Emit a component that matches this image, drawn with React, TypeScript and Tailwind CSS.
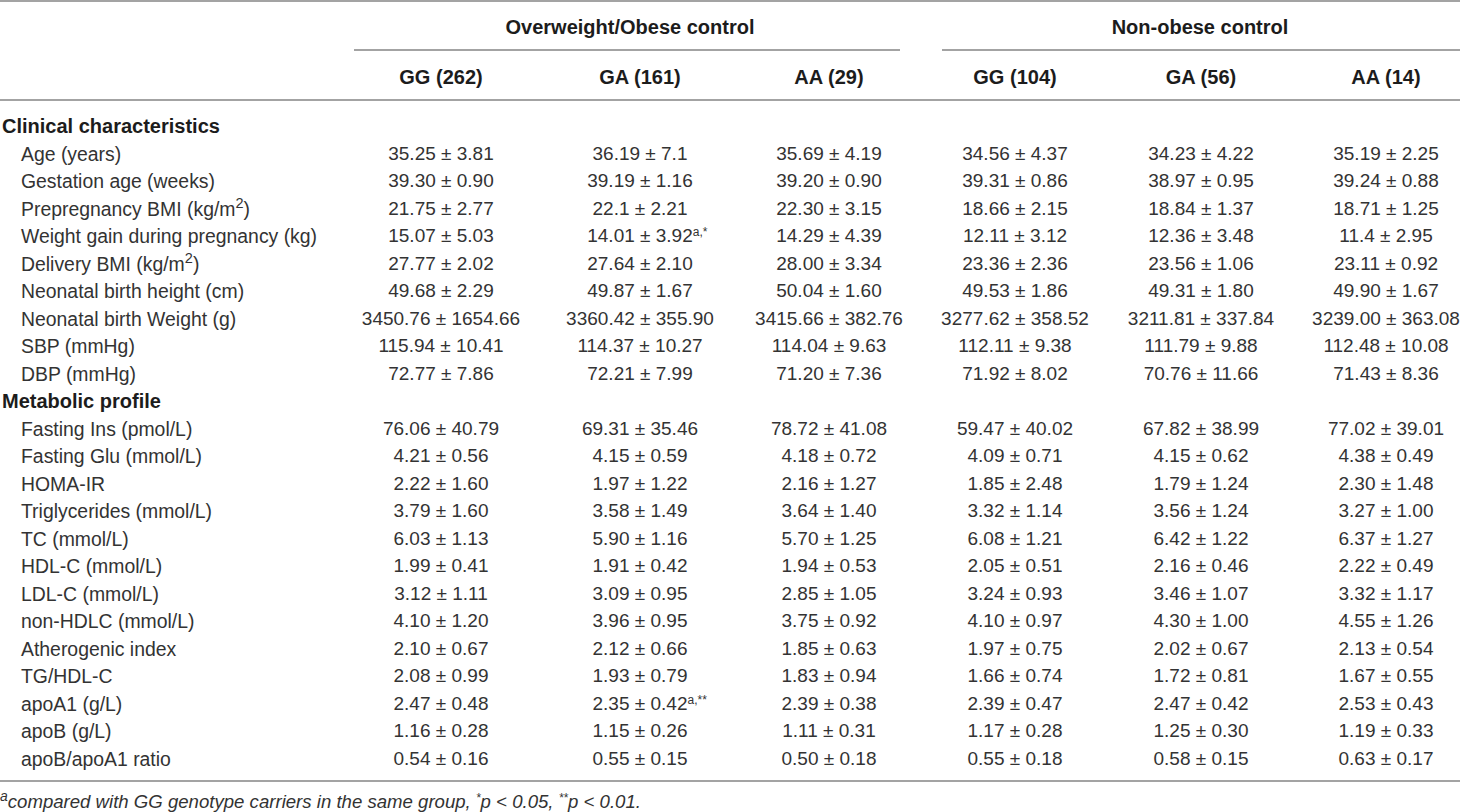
import * as React from 'react';

type Row = {
  label: React.ReactNode;
  values?: React.ReactNode[];
  section?: boolean;
};

const Sup = ({ children }: { children: React.ReactNode }) => (
  <span className="absolute left-full top-[1px] text-[12px] leading-none">{children}</span>
);

const Flag = ({ value, mark }: { value: string; mark: string }) => (
  <span className="relative">
    {value}
    <Sup>{mark}</Sup>
  </span>
);

const kgm2 = (prefix: string) => (
  <>
    {prefix} (kg/m<sup>2</sup>)
  </>
);

const rows: Row[] = [
  { label: 'Clinical characteristics', section: true },
  { label: 'Age (years)', values: ['35.25 ± 3.81', '36.19 ± 7.1', '35.69 ± 4.19', '34.56 ± 4.37', '34.23 ± 4.22', '35.19 ± 2.25'] },
  { label: 'Gestation age (weeks)', values: ['39.30 ± 0.90', '39.19 ± 1.16', '39.20 ± 0.90', '39.31 ± 0.86', '38.97 ± 0.95', '39.24 ± 0.88'] },
  { label: kgm2('Prepregnancy BMI'), values: ['21.75 ± 2.77', '22.1 ± 2.21', '22.30 ± 3.15', '18.66 ± 2.15', '18.84 ± 1.37', '18.71 ± 1.25'] },
  {
    label: 'Weight gain during pregnancy (kg)',
    values: ['15.07 ± 5.03', <Flag value="14.01 ± 3.92" mark="a,*" />, '14.29 ± 4.39', '12.11 ± 3.12', '12.36 ± 3.48', '11.4 ± 2.95'],
  },
  { label: kgm2('Delivery BMI'), values: ['27.77 ± 2.02', '27.64 ± 2.10', '28.00 ± 3.34', '23.36 ± 2.36', '23.56 ± 1.06', '23.11 ± 0.92'] },
  { label: 'Neonatal birth height (cm)', values: ['49.68 ± 2.29', '49.87 ± 1.67', '50.04 ± 1.60', '49.53 ± 1.86', '49.31 ± 1.80', '49.90 ± 1.67'] },
  {
    label: 'Neonatal birth Weight (g)',
    values: ['3450.76 ± 1654.66', '3360.42 ± 355.90', '3415.66 ± 382.76', '3277.62 ± 358.52', '3211.81 ± 337.84', '3239.00 ± 363.08'],
  },
  { label: 'SBP (mmHg)', values: ['115.94 ± 10.41', '114.37 ± 10.27', '114.04 ± 9.63', '112.11 ± 9.38', '111.79 ± 9.88', '112.48 ± 10.08'] },
  { label: 'DBP (mmHg)', values: ['72.77 ± 7.86', '72.21 ± 7.99', '71.20 ± 7.36', '71.92 ± 8.02', '70.76 ± 11.66', '71.43 ± 8.36'] },
  { label: 'Metabolic profile', section: true },
  { label: 'Fasting Ins (pmol/L)', values: ['76.06 ± 40.79', '69.31 ± 35.46', '78.72 ± 41.08', '59.47 ± 40.02', '67.82 ± 38.99', '77.02 ± 39.01'] },
  { label: 'Fasting Glu (mmol/L)', values: ['4.21 ± 0.56', '4.15 ± 0.59', '4.18 ± 0.72', '4.09 ± 0.71', '4.15 ± 0.62', '4.38 ± 0.49'] },
  { label: 'HOMA-IR', values: ['2.22 ± 1.60', '1.97 ± 1.22', '2.16 ± 1.27', '1.85 ± 2.48', '1.79 ± 1.24', '2.30 ± 1.48'] },
  { label: 'Triglycerides (mmol/L)', values: ['3.79 ± 1.60', '3.58 ± 1.49', '3.64 ± 1.40', '3.32 ± 1.14', '3.56 ± 1.24', '3.27 ± 1.00'] },
  { label: 'TC (mmol/L)', values: ['6.03 ± 1.13', '5.90 ± 1.16', '5.70 ± 1.25', '6.08 ± 1.21', '6.42 ± 1.22', '6.37 ± 1.27'] },
  { label: 'HDL-C (mmol/L)', values: ['1.99 ± 0.41', '1.91 ± 0.42', '1.94 ± 0.53', '2.05 ± 0.51', '2.16 ± 0.46', '2.22 ± 0.49'] },
  { label: 'LDL-C (mmol/L)', values: ['3.12 ± 1.11', '3.09 ± 0.95', '2.85 ± 1.05', '3.24 ± 0.93', '3.46 ± 1.07', '3.32 ± 1.17'] },
  { label: 'non-HDLC (mmol/L)', values: ['4.10 ± 1.20', '3.96 ± 0.95', '3.75 ± 0.92', '4.10 ± 0.97', '4.30 ± 1.00', '4.55 ± 1.26'] },
  { label: 'Atherogenic index', values: ['2.10 ± 0.67', '2.12 ± 0.66', '1.85 ± 0.63', '1.97 ± 0.75', '2.02 ± 0.67', '2.13 ± 0.54'] },
  { label: 'TG/HDL-C', values: ['2.08 ± 0.99', '1.93 ± 0.79', '1.83 ± 0.94', '1.66 ± 0.74', '1.72 ± 0.81', '1.67 ± 0.55'] },
  {
    label: 'apoA1 (g/L)',
    values: ['2.47 ± 0.48', <Flag value="2.35 ± 0.42" mark="a,**" />, '2.39 ± 0.38', '2.39 ± 0.47', '2.47 ± 0.42', '2.53 ± 0.43'],
  },
  { label: 'apoB (g/L)', values: ['1.16 ± 0.28', '1.15 ± 0.26', '1.11 ± 0.31', '1.17 ± 0.28', '1.25 ± 0.30', '1.19 ± 0.33'] },
  { label: 'apoB/apoA1 ratio', values: ['0.54 ± 0.16', '0.55 ± 0.15', '0.50 ± 0.18', '0.55 ± 0.18', '0.58 ± 0.15', '0.63 ± 0.17'] },
];

const genotypes = ['GG (262)', 'GA (161)', 'AA (29)', 'GG (104)', 'GA (56)', 'AA (14)'];

const cols = 'grid grid-cols-[320px_242px_156px_222px_150px_222px_148px]';

const Rule = () => <div className="h-[2px] w-full bg-[#a3a3a3]" />;

export default function App() {
  return (
    <div className="w-[1460px] h-[812px] overflow-hidden bg-white font-['Liberation_Sans',Arial,sans-serif] text-[#333333]">
      <Rule />

      {/* group headers */}
      <div className={`${cols} text-[20px] font-bold text-[#1c1c1c]`}>
        <div />
        <div className="col-span-3 flex flex-col">
          <div className="flex h-[47px] items-center justify-center pt-[3px]">Overweight/Obese control</div>
          <div className="ml-[34px] mr-[40px] h-[2px] bg-[#a3a3a3]" />
        </div>
        <div className="col-span-3 flex flex-col">
          <div className="flex h-[47px] items-center justify-center pt-[3px]">Non-obese control</div>
          <div className="ml-[2px] h-[2px] bg-[#a3a3a3]" />
        </div>
      </div>

      {/* genotype headers */}
      <div className={`${cols} h-[48px] items-center pt-[3px] text-[20px] font-bold text-[#1c1c1c]`}>
        <div />
        {genotypes.map((g) => (
          <div key={g} className="text-center">
            {g}
          </div>
        ))}
      </div>

      <Rule />

      <div className="pt-[11px] pb-[8px]">
        {rows.map((row, i) =>
          row.section ? (
            <div key={i} className="flex h-[27.5px] items-center pl-[2px] text-[20px] font-bold text-[#1c1c1c]">
              {row.label}
            </div>
          ) : (
            <div key={i} className={`${cols} h-[27.5px] items-center text-[19px]`}>
              <div className="pl-[21px] whitespace-nowrap text-[19.4px]">{row.label}</div>
              {row.values?.map((v, j) => (
                <div key={j} className="text-center whitespace-nowrap">
                  {v}
                </div>
              ))}
            </div>
          ),
        )}
      </div>

      <Rule />

      <div className="mt-[10px] h-[20px] whitespace-nowrap text-[18.6px] leading-[20px] italic">
        <sup>a</sup>compared with GG genotype carriers in the same group, <sup className="text-[12px]">*</sup>p &lt; 0.05,{' '}
        <sup className="text-[12px]">**</sup>p &lt; 0.01.
      </div>
    </div>
  );
}
